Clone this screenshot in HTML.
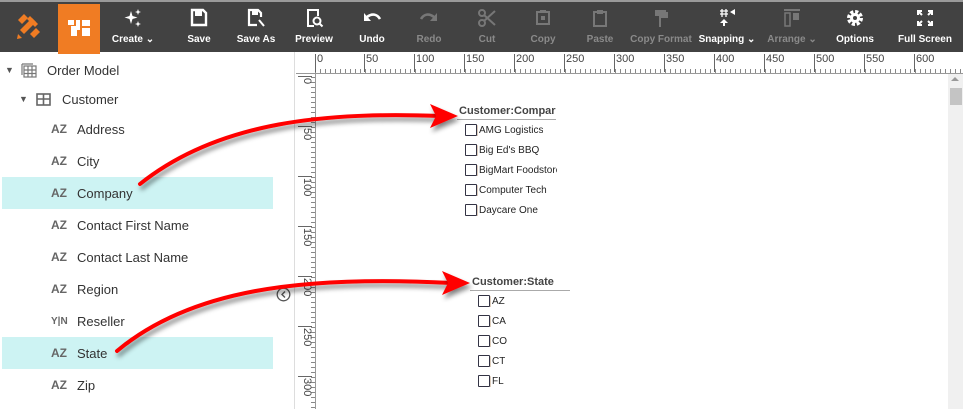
<!DOCTYPE html>
<html><head><meta charset="utf-8">
<style>
*{margin:0;padding:0;box-sizing:border-box}
body{width:963px;height:409px;overflow:hidden;background:#fff;font-family:"Liberation Sans",sans-serif;position:relative}
#tb{position:absolute;left:0;top:0;width:963px;height:52px;background:#424242;border-top:2px solid #9a9a9a}
.logo{position:absolute;left:58px;top:2px;width:42px;height:50px;background:#f07c23}
.it{position:absolute;top:2px;width:70px;margin-left:-35px;text-align:center;color:#fff;font-size:10px;font-weight:bold}
.it svg{display:block;margin:4px auto 0;height:20px}
.it span{display:block;margin-top:6px;white-space:nowrap}
.dis{color:#8a8a8a}
#left{position:absolute;left:0;top:52px;width:295px;height:357px;border-right:1px solid #ddd}
.row{position:absolute;left:2px;width:271px;height:32px;font-size:13px;color:#333;line-height:33px}
.hl{background:#cdf3f3}
.az{position:absolute;left:49px;font-weight:bold;color:#666;font-size:12px}
.lb{position:absolute;left:75px}
#hr{position:absolute;left:296px;top:52px;width:667px;height:22px;background:#fff;border-bottom:1px solid #999;
 background-image:repeating-linear-gradient(90deg,#888 0 1px,transparent 1px 5px);background-size:100% 4px;background-repeat:no-repeat;background-position:19px 17px}
#vr{position:absolute;left:296px;top:74px;width:20px;height:335px;border-right:1px solid #999;
 background-image:repeating-linear-gradient(180deg,#888 0 1px,transparent 1px 5px);background-size:4px 100%;background-repeat:no-repeat;background-position:15px 3px}
.hl1{position:absolute;top:2px;font-size:11px;color:#444;border-left:1px solid #666;padding-left:1px;height:18px;line-height:11px}
.vl{position:absolute;left:2px;font-size:11px;color:#444;transform:rotate(90deg);transform-origin:0 0;border-left:1px solid #666;height:14px;padding-left:1px;line-height:11px}
.tbl{position:absolute;font-size:11px;color:#333}
.th{font-weight:bold;color:#444;border-bottom:1px solid #aaa;padding:0 0 2px 2px;overflow:hidden;white-space:nowrap}
.cb{position:absolute;font-size:10px;color:#222;white-space:nowrap;overflow:hidden}
.cb i{display:inline-block;width:12px;height:12px;border:1px solid #334;border-radius:1px;vertical-align:-3px;margin-right:2px;box-shadow:1px 1px 0 #dcb}
</style></head><body>
<div id="tb">
 <svg style="position:absolute;left:14px;top:10px" width="30" height="30" viewBox="0 0 30 30"><g fill="#f07c23"><path d="M4 8l6-6 4 4-6 6z"/><path d="M16 4l8 8-3 3-8-8z"/><path d="M6 18l12-12 4 4-12 12z"/><path d="M4 22l4 4-5 1z"/><path d="M16 22l6-6 4 4-6 6z"/></g></svg>
 <div class="logo"><svg width="42" height="48" viewBox="0 0 42 48"><g fill="#fff"><rect x="10" y="16" width="6" height="5"/><rect x="18" y="16" width="4" height="10"/><rect x="24" y="16" width="8" height="6"/><rect x="24" y="24" width="8" height="8"/><rect x="13" y="22" width="6" height="10"/></g></svg></div>
 <div class="it" style="left:133px"><svg viewBox="0 0 20 20" width="20"><path fill="#fff" d="M8 3l1.5 5 5 1.5-5 1.5L8 16l-1.5-5-5-1.5 5-1.5zM15 1l.8 2.2 2.2.8-2.2.8L15 7l-.8-2.2-2.2-.8 2.2-.8zM15 13l.8 2.2 2.2.8-2.2.8L15 19l-.8-2.2-2.2-.8 2.2-.8z"/></svg><span>Create ⌄</span></div>
 <div class="it" style="left:199px"><svg viewBox="0 0 20 20" width="20"><path fill="none" stroke="#fff" stroke-width="2.4" d="M3 2h11l3 3v12H3z"/><rect x="6" y="3" width="7" height="5" fill="#fff"/></svg><span>Save</span></div>
 <div class="it" style="left:256px"><svg viewBox="0 0 20 20" width="20"><path fill="none" stroke="#fff" stroke-width="2.2" d="M15 9V5l-3-3H3v15h8"/><rect x="6" y="3" width="6" height="4" fill="#fff"/><path d="M13 12l5 6" stroke="#fff" stroke-width="2"/></svg><span>Save As</span></div>
 <div class="it" style="left:314px"><svg viewBox="0 0 20 20" width="20"><path fill="none" stroke="#fff" stroke-width="2" d="M10 18H4V2h10v6"/><circle cx="13" cy="13" r="3.5" fill="none" stroke="#fff" stroke-width="2"/><path d="M15.5 15.5l3 3" stroke="#fff" stroke-width="2"/></svg><span>Preview</span></div>
 <div class="it" style="left:372px"><svg viewBox="0 0 20 20" width="20"><path fill="none" stroke="#fff" stroke-width="2.6" d="M5 9c5-4 10-3 13 2"/><path fill="#fff" d="M2 5v8h7z"/></svg><span>Undo</span></div>
 <div class="it dis" style="left:429px"><svg viewBox="0 0 20 20" width="20"><path fill="none" stroke="#777" stroke-width="2.6" d="M15 9c-5-4-10-3-13 2"/><path fill="#777" d="M18 5v8h-7z"/></svg><span>Redo</span></div>
 <div class="it dis" style="left:487px"><svg viewBox="0 0 20 20" width="20"><g stroke="#777" stroke-width="2" fill="none"><circle cx="5" cy="5" r="3"/><circle cx="5" cy="15" r="3"/><path d="M7 7l11 10M7 13L18 3"/></g></svg><span>Cut</span></div>
 <div class="it dis" style="left:543px"><svg viewBox="0 0 20 20" width="20"><path fill="none" stroke="#777" stroke-width="2" d="M4 4h12v12H4z"/><rect x="7" y="2" width="6" height="3" fill="#777"/><rect x="8" y="8" width="4" height="4" fill="#777"/></svg><span>Copy</span></div>
 <div class="it dis" style="left:600px"><svg viewBox="0 0 20 20" width="20"><path fill="none" stroke="#777" stroke-width="2" d="M4 4h12v14H4z"/><rect x="7" y="2" width="6" height="4" fill="#777"/></svg><span>Paste</span></div>
 <div class="it dis" style="left:661px;width:80px;margin-left:-40px"><svg viewBox="0 0 20 20" width="20"><path fill="#777" d="M4 2h11v6H4zM15 4h2v6h-7v2H8v-4h7z M8 12h2v7H8z"/></svg><span>Copy Format</span></div>
 <div class="it" style="left:727px"><svg viewBox="0 0 20 20" width="20"><g fill="#fff"><path d="M3 3h8M3 6h8M5 1v8M9 1v8" stroke="#fff" stroke-width="1.3"/><path d="M13 4l5-3v6z"/><path d="M7 11l-4 4h8z"/><rect x="6" y="14" width="2" height="4"/></g></svg><span>Snapping ⌄</span></div>
 <div class="it dis" style="left:792px"><svg viewBox="0 0 20 20" width="20"><g fill="#777"><rect x="2" y="1" width="16" height="2"/><rect x="3" y="5" width="5" height="13" fill="none" stroke="#777" stroke-width="1.5"/><rect x="11" y="5" width="6" height="7"/></g></svg><span>Arrange ⌄</span></div>
 <div class="it" style="left:855px"><svg viewBox="0 0 20 20" width="20"><circle cx="10" cy="10" r="6" fill="none" stroke="#fff" stroke-width="4" stroke-dasharray="3 1.7"/><circle cx="10" cy="10" r="5" fill="#fff"/><circle cx="10" cy="10" r="2" fill="#424242"/></svg><span>Options</span></div>
 <div class="it" style="left:925px"><svg viewBox="0 0 20 20" width="20"><g stroke="#fff" stroke-width="2" fill="none"><path d="M3 7V3h4M3 3l4 4M13 3h4v4M17 3l-4 4M3 13v4h4M3 17l4-4M17 13v4h-4M17 17l-4-4"/></g></svg><span>Full Screen</span></div>
</div>

<div id="left">
 <div class="row" style="top:2px;left:0;width:290px"><span style="position:absolute;left:5px;font-size:9px;color:#555">▼</span>
  <svg style="position:absolute;left:21px;top:9px" width="16" height="15" viewBox="0 0 16 15"><g fill="none" stroke="#777" stroke-width="1.2"><rect x="3" y="3" width="12" height="11"/><path d="M1 1h11M1 1v11M3 7h12M3 10.5h12M7 3v11M11 3v11"/></g></svg>
  <span class="lb" style="left:47px">Order Model</span></div>
 <div class="row" style="top:31px;left:0;width:290px"><span style="position:absolute;left:19px;font-size:9px;color:#555">▼</span>
  <svg style="position:absolute;left:36px;top:10px" width="15" height="13" viewBox="0 0 15 13"><g fill="none" stroke="#666" stroke-width="1.6"><rect x="1" y="1" width="13" height="11"/><path d="M1 6h13M7.5 1v11"/></g></svg>
  <span class="lb" style="left:62px">Customer</span></div>
 <div class="row" style="top:61px"><span class="az">AZ</span><span class="lb">Address</span></div>
 <div class="row" style="top:93px"><span class="az">AZ</span><span class="lb">City</span></div>
 <div class="row hl" style="top:125px"><span class="az">AZ</span><span class="lb">Company</span></div>
 <div class="row" style="top:157px"><span class="az">AZ</span><span class="lb">Contact First Name</span></div>
 <div class="row" style="top:189px"><span class="az">AZ</span><span class="lb">Contact Last Name</span></div>
 <div class="row" style="top:221px"><span class="az">AZ</span><span class="lb">Region</span></div>
 <div class="row" style="top:253px"><span class="az" style="font-size:10px">Y|N</span><span class="lb">Reseller</span></div>
 <div class="row hl" style="top:285px"><span class="az">AZ</span><span class="lb">State</span></div>
 <div class="row" style="top:317px"><span class="az">AZ</span><span class="lb">Zip</span></div>
</div>

<div id="hr">
 <span class="hl1" style="left:19px">0</span><span class="hl1" style="left:68px">50</span><span class="hl1" style="left:118px">100</span><span class="hl1" style="left:168px">150</span><span class="hl1" style="left:218px">200</span><span class="hl1" style="left:268px">250</span><span class="hl1" style="left:318px">300</span><span class="hl1" style="left:368px">350</span><span class="hl1" style="left:418px">400</span><span class="hl1" style="left:468px">450</span><span class="hl1" style="left:518px">500</span><span class="hl1" style="left:568px">550</span><span class="hl1" style="left:618px">600</span>
</div>
<div id="vr">
 <span class="vl" style="top:2px;left:16px">0</span><span class="vl" style="top:52px;left:16px">50</span><span class="vl" style="top:102px;left:16px">100</span><span class="vl" style="top:152px;left:16px">150</span><span class="vl" style="top:202px;left:16px">200</span><span class="vl" style="top:252px;left:16px">250</span><span class="vl" style="top:302px;left:16px">300</span>
</div>
<div style="position:absolute;left:948px;top:74px;width:15px;height:335px;background:#f0f0f0"></div>
<div style="position:absolute;left:950px;top:88px;width:12px;height:17px;background:#c4c4c4"></div>
<div style="position:absolute;left:951px;top:77px;width:0;height:0;border:4px solid transparent;border-bottom:4px solid #999;border-top:0"></div>
<svg style="position:absolute;left:276px;top:287px" width="15" height="15"><circle cx="7.5" cy="7.5" r="6.3" fill="#fff" stroke="#555" stroke-width="1.3"/><path d="M9 4.5L6 7.5 9 10.5" fill="none" stroke="#555" stroke-width="1.4"/></svg>

<div class="tbl" style="left:457px;top:105px;width:99px"><div class="th">Customer:Compar</div></div>
<div class="cb" style="left:465px;top:124px"><i></i>AMG Logistics</div>
<div class="cb" style="left:465px;top:144px"><i></i>Big Ed's BBQ</div>
<div class="cb" style="left:465px;top:164px;width:92px"><i></i>BigMart Foodstore</div>
<div class="cb" style="left:465px;top:184px"><i></i>Computer Tech</div>
<div class="cb" style="left:465px;top:204px"><i></i>Daycare One</div>

<div class="tbl" style="left:470px;top:276px;width:100px"><div class="th">Customer:State</div></div>
<div class="cb" style="left:478px;top:295px"><i></i>AZ</div>
<div class="cb" style="left:478px;top:315px"><i></i>CA</div>
<div class="cb" style="left:478px;top:335px"><i></i>CO</div>
<div class="cb" style="left:478px;top:355px"><i></i>CT</div>
<div class="cb" style="left:478px;top:375px"><i></i>FL</div>

<svg style="position:absolute;left:0;top:0" width="963" height="409">
 <defs><filter id="sh" x="-10%" y="-50%" width="120%" height="200%"><feDropShadow dx="2" dy="4" stdDeviation="2.5" flood-color="#000" flood-opacity="0.45"/></filter></defs>
 <g filter="url(#sh)" fill="none" stroke="#f00" stroke-width="4" stroke-linecap="round">
  <path d="M140 184C220 120 330 112 440 116"/>
  <path d="M117 351C190 290 300 275 452 283"/>
 </g>
 <g filter="url(#sh)" fill="#f00">
  <path d="M458 116L430 104 436 116 430 128z"/>
  <path d="M470 283L442 271 448 283 442 295z"/>
 </g>
</svg>
</body></html>
